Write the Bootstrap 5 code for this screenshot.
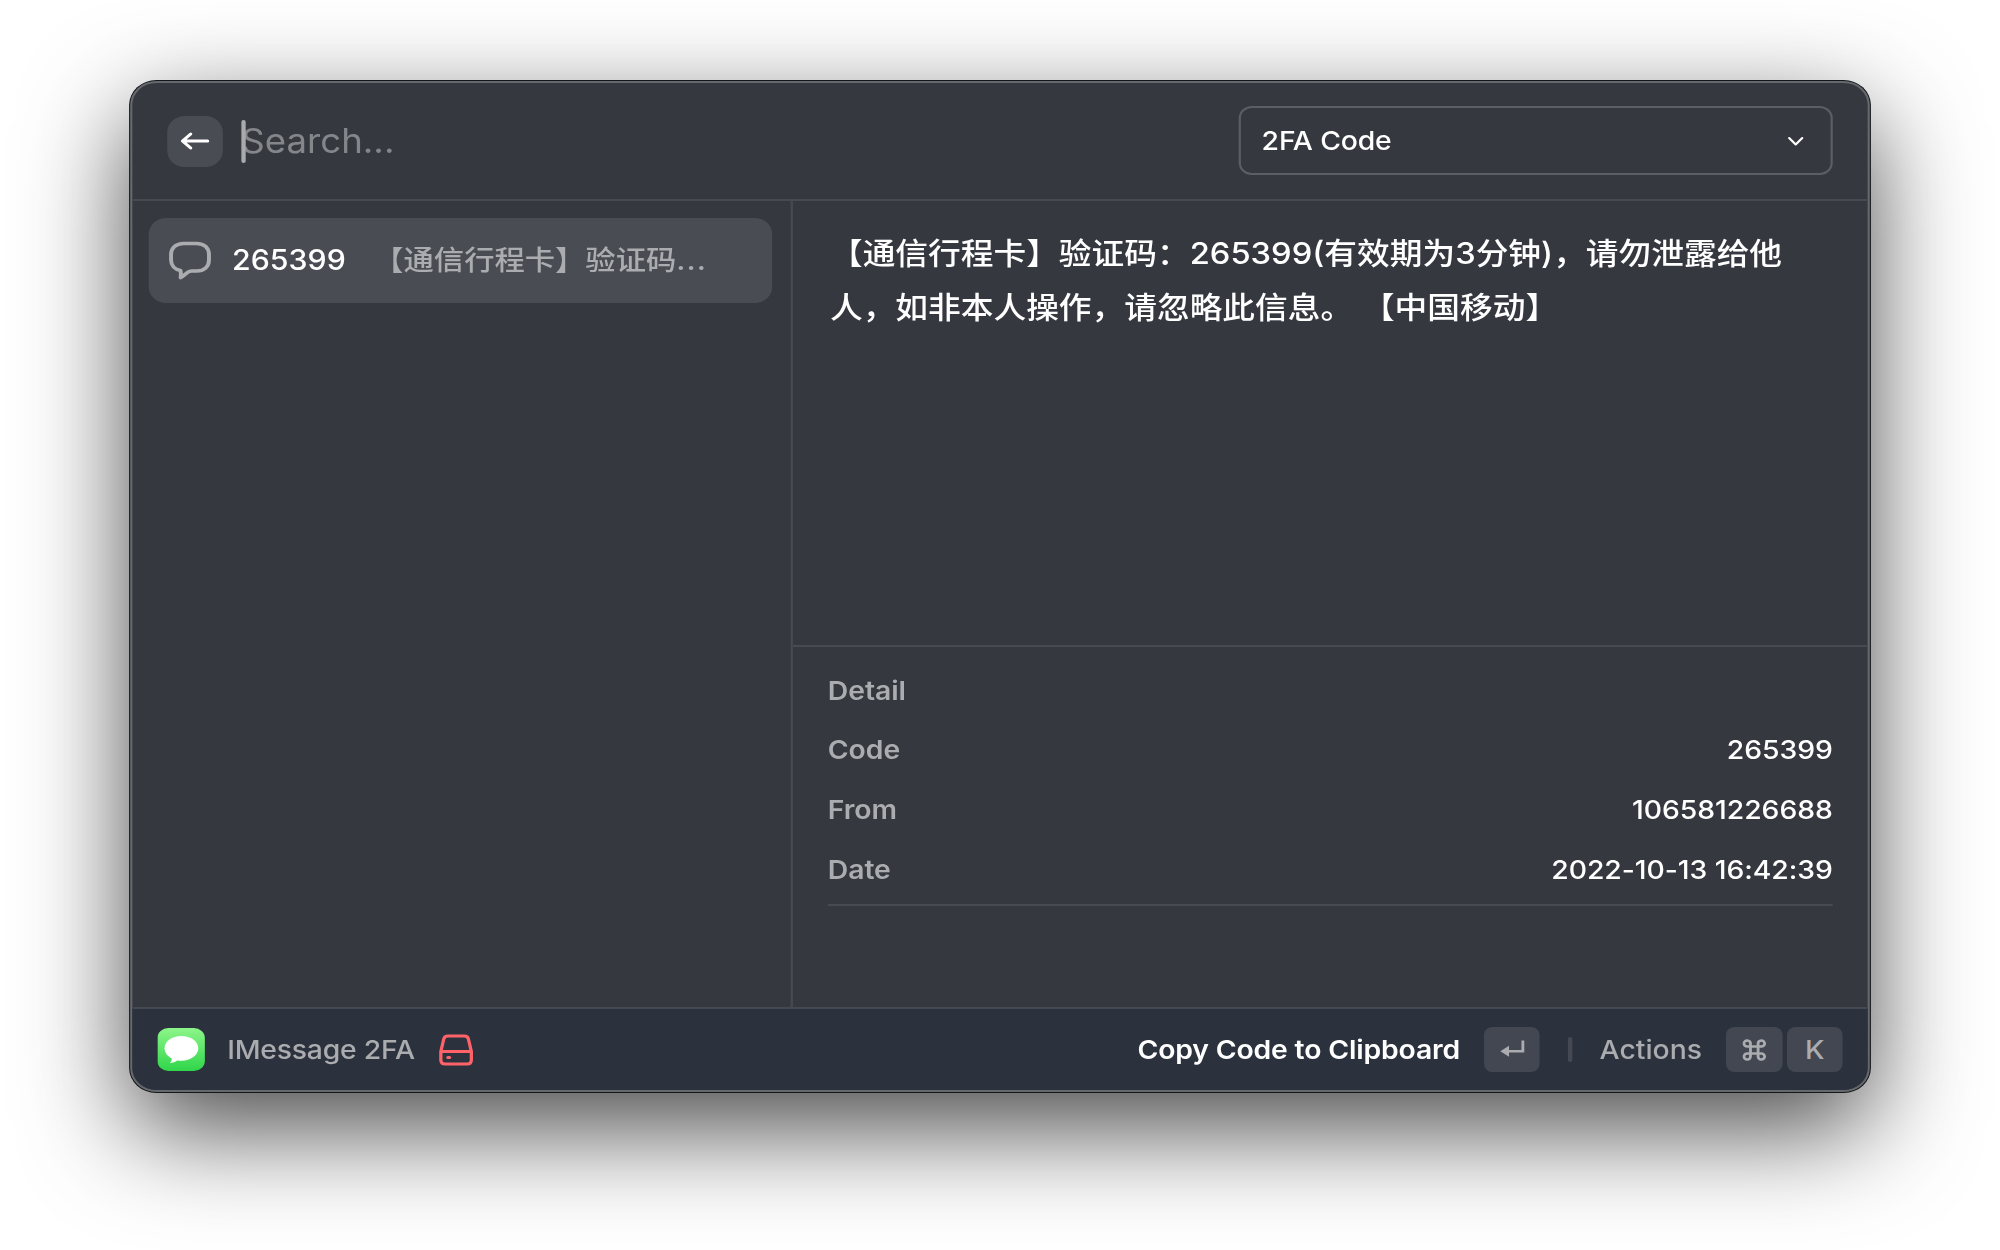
<!DOCTYPE html>
<html lang="zh-CN">
<head>
<meta charset="utf-8">
<title>2FA Code</title>
<link href="https://cdn.jsdelivr.net/npm/bootstrap@5.3.0/dist/css/bootstrap.min.css" rel="stylesheet">
<style>
body{width:2000px;height:1250px;overflow:hidden;background:#fff;padding-top:81px;font-family:Inter,"Noto Sans CJK SC",sans-serif;font-size:26px;letter-spacing:-.15px;line-height:1.2;font-weight:500;color:#fff;text-spacing-trim:space-all}
.app-window{width:1596px;height:1011px;background:#363840;border:2px solid #65686d;border-radius:24px;transform:scaleX(1.09);box-shadow:0 0 0 1px #15171b,0 36px 100px rgba(0,0,0,.72)}
.line-b{border-bottom:2px solid #484a51}
.top-bar{height:118px;padding:0 32px;flex:none}
.back-btn{width:51px;height:51px;border-radius:16px;background:#4a4c53}
.search-box{margin-left:17px;font-size:33.6px;letter-spacing:0;font-weight:400;color:#85868a}
.caret-bar{position:absolute;left:0;top:-1px;width:4px;height:43px;border-radius:2px;background:#a9aaac}
.picker{width:545px;height:69px;border:2px solid #5c5e63;border-radius:12px;padding:0 24px 0 19px;margin-bottom:1px}
.list-col{width:606px;border-right:2px solid #484a51;padding:17px 17px 0 14.5px;flex:none}
.list-entry{height:85px;border-radius:16px;background:#4a4c53;padding:1px 0 0 18px;font-size:27.8px;letter-spacing:0}
.soft{color:#abacaf}
.entry-title{margin-left:19px;width:129.5px}
.dots{letter-spacing:1px}
.message{height:446px;padding:25px 32px 0 34px;font-size:30px;letter-spacing:0;line-height:54.2px;white-space:nowrap}
.meta{padding:13.5px 32px 0}
.meta-line{height:59.7px}
.meta-line .soft{font-weight:600}
.meta-line span{letter-spacing:-.05px}
.meta-list{height:245px}
.footer-bar{height:83px;background:#2c323d;border-top:2px solid #444953;padding:0 23px 0 23px;border-radius:0 0 22px 22px;flex:none}
.keycap{width:51px;height:45px;border-radius:8px;background:#424751;color:#abacaf}
.keycap.enter{margin:0 26px 0 22px}
.keycap.cmd{width:52px}
.sep{width:4px;height:25px;border-radius:2px;background:#444953}
.app-name{margin:0 22px 0 20px;letter-spacing:-.2px}
.actions{margin:0 22px 0 25px;letter-spacing:0}
</style>
<script src="https://cdn.jsdelivr.net/npm/bootstrap@5.3.0/dist/js/bootstrap.bundle.min.js"></script>
</head>
<body>
<main class="app-window mx-auto d-flex flex-column">
  <header class="top-bar line-b d-flex align-items-center">
    <button class="btn back-btn p-0 border-0 d-flex align-items-center justify-content-center" aria-label="Back">
      <svg width="28" height="22" viewBox="0 0 28 22" fill="none" stroke="#fff" stroke-width="3" stroke-linecap="round" stroke-linejoin="round"><path d="M25 11H2.500M9.500 4L2 11L9.500 18"/></svg>
    </button>
    <div class="search-box position-relative">Search...<span class="caret-bar"></span></div>
    <div class="picker ms-auto d-flex align-items-center justify-content-between">
      <span>2FA Code</span>
      <svg width="16" height="12" viewBox="0 0 16 12" fill="none" stroke="#fff" stroke-width="2" stroke-linecap="round" stroke-linejoin="round"><path d="M2 3L8 9.500L14 3"/></svg>
    </div>
  </header>
  <div class="d-flex flex-grow-1">
    <section class="list-col">
      <div class="list-entry d-flex align-items-center">
        <svg width="40" height="40" viewBox="0 0 40 40" fill="none" stroke="#abacaf" stroke-width="3.600" stroke-linejoin="round"><path d="M14 2.500H26C33 2.500 37.300 7 37.300 13.500V19C37.300 25.500 33 30 26 30H21.500Q19.500 30 18 31.200C15.500 33.200 13.800 34.700 11.300 36.600C11.600 34.500 11.700 32.200 11.200 29.500C5.800 28.500 2.500 24.500 2.500 19V13.500C2.500 7 7 2.500 14 2.500Z"/></svg>
        <span class="entry-title">265399</span>
        <span class="soft text-nowrap">【通信行程卡】验证码<span class="dots">...</span></span>
      </div>
    </section>
    <section class="flex-grow-1">
      <div class="message line-b">【通信行程卡】验证码：265399(有效期为3分钟)，请勿泄露给他<br>人，如非本人操作，请忽略此信息。 【中国移动】</div>
      <div class="meta">
        <div class="meta-list line-b">
          <div class="meta-line d-flex align-items-center"><span class="soft">Detail</span></div>
          <div class="meta-line d-flex align-items-center justify-content-between"><span class="soft">Code</span><span>265399</span></div>
          <div class="meta-line d-flex align-items-center justify-content-between"><span class="soft">From</span><span>106581226688</span></div>
          <div class="meta-line d-flex align-items-center justify-content-between"><span class="soft">Date</span><span>2022-10-13 16:42:39</span></div>
        </div>
      </div>
    </section>
  </div>
  <footer class="footer-bar d-flex align-items-center">
    <svg width="44" height="43" viewBox="0 0 44 43"><defs><linearGradient id="msg" x1="0" y1="0" x2="0" y2="1"><stop offset="0" stop-color="#8df58a"/><stop offset="1" stop-color="#2fd64a"/></linearGradient></defs><rect width="43.500" height="43" rx="10" fill="url(#msg)"/><path d="M22 8C13.300 8 6.500 13.400 6.500 20.300C6.500 24.600 9.200 28.400 13.300 30.600C13.200 32.300 12.500 33.800 11.300 35C14 34.900 16.500 33.900 18.300 32.400C19.500 32.600 20.700 32.700 22 32.700C30.700 32.700 37.500 27.200 37.500 20.300C37.500 13.400 30.700 8 22 8Z" fill="#fff"/></svg>
    <span class="soft app-name">IMessage 2FA</span>
    <svg width="32" height="32" viewBox="0 0 32 32" fill="none" stroke="#ff6369" stroke-width="3" stroke-linejoin="round"><path d="M2 17.500L4.700 5Q5.400 2 8.500 2H23.500Q26.600 2 27.300 5L30 17.500V26Q30 30 26 30H6Q2 30 2 26ZM2.500 17.500H29.500"/><path d="M8.500 23.500H10" stroke-linecap="round"/></svg>
    <strong class="ms-auto fw-semibold">Copy Code to Clipboard</strong>
    <span class="keycap enter d-flex align-items-center justify-content-center"><svg width="24" height="22" viewBox="0 0 24 22" fill="none" stroke="#abacaf" stroke-width="2.600"><path d="M21.700 1.500V12.300H6"/><path d="M9 6.800L1 12.300L9 17.800Z" fill="#abacaf" stroke="none"/></svg></span>
    <span class="sep"></span>
    <span class="soft actions">Actions</span>
    <span class="keycap cmd d-flex align-items-center justify-content-center"><svg width="22" height="22" viewBox="0 0 22 22" fill="none" stroke="#abacaf" stroke-width="2.600"><path d="M7.500 7.500H14.500V14.500H7.500ZM7.500 7.500V4.700A3 3 0 1 0 4.600 7.500ZM4.600 7.500H7.500M14.500 7.500H17.400A3 3 0 1 0 14.500 4.700ZM14.500 14.500V17.300A3 3 0 1 0 17.400 14.500ZM7.500 14.500H4.600A3 3 0 1 0 7.500 17.300Z"/></svg></span>
    <span class="keycap ms-1 d-flex align-items-center justify-content-center">K</span>
  </footer>
</main>
</body>
</html>
